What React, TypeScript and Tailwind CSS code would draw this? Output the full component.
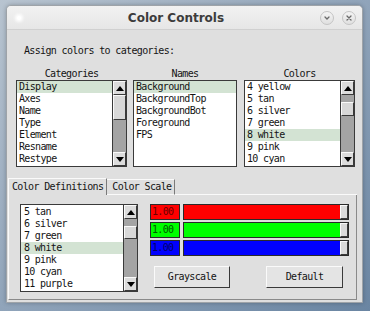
import React from "react";

const mono =
  "font-['DejaVu_Sans_Mono',monospace] text-[10px] leading-[12px] tracking-[-0.65px] text-[#141414] whitespace-nowrap";

const raised =
  "border border-t-[#fafafa] border-l-[#fafafa] border-b-[#3a3a3a] border-r-[#3a3a3a]";

const Arrow = ({ dir }: { dir: "up" | "down" }) => (
  <div className={`h-[14px] shrink-0 bg-[#dcdcdc] flex items-center justify-center ${raised}`}>
    <svg width="8" height="5" viewBox="0 0 8 5">
      <path d={dir === "up" ? "M0 5 L4 0 L8 5 Z" : "M0 0 L4 5 L8 0 Z"} fill="#000" />
    </svg>
  </div>
);

const ScrollBar = ({ before, thumb }: { before: number; thumb: number }) => (
  <div className="w-[14px] shrink-0 flex flex-col bg-[#a4a4a4] border-l border-[#3a3a3a]">
    <Arrow dir="up" />
    <div style={{ height: before }} className="shrink-0" />
    <div style={{ height: thumb }} className={`shrink-0 bg-[#d8d8d8] ${raised}`} />
    <div className="flex-1" />
    <Arrow dir="down" />
  </div>
);

type ListProps = {
  items: string[];
  selected: string;
  offset?: number;
  pad?: string;
  scroll?: { before: number; thumb: number };
  className: string;
};

const ListBox = ({ items, selected, offset = 0, pad = "pl-[2px]", scroll, className }: ListProps) => (
  <div className={`flex bg-white border border-[#3a3a3a] overflow-hidden ${className}`}>
    <div className="flex-1 overflow-hidden">
      <div style={{ marginTop: offset }}>
        {items.map((item) => (
          <div
            key={item}
            className={`h-[12px] ${pad} ${mono} ${item === selected ? "bg-[#d3e3d3]" : ""}`}
          >
            {item}
          </div>
        ))}
      </div>
    </div>
    {scroll && <ScrollBar before={scroll.before} thumb={scroll.thumb} />}
  </div>
);

const ColorRow = ({ color, ink }: { color: string; ink: string }) => (
  <div className="flex h-[16px] gap-[3px]">
    <div
      style={{ backgroundColor: color, color: ink }}
      className="w-[30px] border border-[#2a2a2a] pl-[1px] font-['DejaVu_Sans_Mono',monospace] text-[10px] leading-[14px] tracking-[-0.65px]"
    >
      1.00
    </div>
    <div className="flex-1 flex border border-[#2a2a2a]">
      <div style={{ backgroundColor: color }} className="flex-1" />
      <div className={`w-[8px] bg-[#dadada] ${raised}`} />
    </div>
  </div>
);

const TitleButton = ({ kind }: { kind: "min" | "close" }) => (
  <div className="w-[14px] h-[14px] rounded-full border border-[#c4c4c4] bg-linear-to-b from-[#f4f4f4] to-[#e0e0e0] flex items-center justify-center">
    <svg width="6" height="6" viewBox="0 0 6 6" fill="none" stroke="#6a6a6a" strokeWidth="1.3" strokeLinecap="round">
      {kind === "min" ? <path d="M1 2 L3 4 L5 2" /> : <path d="M1 1 L5 5 M5 1 L1 5" />}
    </svg>
  </div>
);

const App = () => {
  const colorNames = ["4 yellow", "5 tan", "6 silver", "7 green", "8 white", "9 pink", "10 cyan", "11 purple"];

  return (
    <div className="w-[370px] h-[311px] overflow-hidden bg-linear-to-br from-[#b8c4d0] via-[#90a4ba] to-[#6a85a2] pl-[6px] pt-[5px]">
      <div className="w-[357px] h-[298px] flex flex-col rounded-t-[5px] border border-[#9ea3a8] bg-[#dfdfdf] shadow-[0_0_4px_rgba(0,0,0,0.25)] overflow-hidden">
        {/* title bar */}
        <div className="h-[24px] shrink-0 flex items-center bg-linear-to-b from-[#f2f2f2] to-[#e6e6e6] border-b border-[#d0d0d0]">
          <div className="w-[25px] pl-[10px] flex items-center">
            <div className="w-[4px] h-[4px] rounded-full bg-white shadow-[0_0_3px_2px_rgba(255,255,255,0.9)]" />
          </div>
          <div className="flex-1 text-center font-['DejaVu_Sans',sans-serif] font-bold text-[12px] text-[#3c3c3c]">
            Color Controls
          </div>
          <div className="flex gap-[8px] pr-[6px] pt-[1px]">
            <TitleButton kind="min" />
            <TitleButton kind="close" />
          </div>
        </div>

        {/* body */}
        <div className="flex-1 flex flex-col">
          <div className={`ml-[17px] mt-[15px] ${mono}`}>Assign colors to categories:</div>

          <div className={`ml-[9px] mt-[11px] flex gap-[6px] ${mono}`}>
            <div className="w-[111px] text-center">Categories</div>
            <div className="w-[104px] text-center">Names</div>
            <div className="w-[111px] ml-[1px] text-center">Colors</div>
          </div>

          <div className="ml-[9px] flex gap-[6px] h-[87px]">
            <ListBox
              className="w-[111px]"
              items={["Display", "Axes", "Name", "Type", "Element", "Resname", "Restype", "Chain"]}
              selected="Display"
              scroll={{ before: 0, thumb: 25 }}
            />
            <ListBox
              className="w-[104px]"
              items={["Background", "BackgroundTop", "BackgroundBot", "Foreground", "FPS"]}
              selected="Background"
            />
            <ListBox
              className="w-[111px] ml-[1px]"
              items={colorNames}
              selected="8 white"
              scroll={{ before: 7, thumb: 14 }}
            />
          </div>

          {/* notebook */}
          <div className="ml-[1px] mt-[11px] w-[349px] flex flex-col">
            <div className={`h-[17px] flex items-end ${mono}`}>
              <div className="h-[17px] pl-[3px] pr-[3px] flex items-center border-t border-l border-r border-t-[#fafafa] border-l-[#fafafa] border-r-[#7a7a7a] bg-[#dfdfdf]">
                Color Definitions
              </div>
              <div className="h-[16px] pl-[5px] pr-[3px] flex items-center border-t border-r border-t-[#fafafa] border-r-[#7a7a7a] border-b border-b-[#fafafa]">
                Color Scale
              </div>
              <div className="flex-1 border-b border-[#fafafa]" />
            </div>

            <div className="h-[105px] flex pl-[11px] pt-[9px] border-l border-r border-b border-l-[#fafafa] border-r-[#8a8a8a] border-b-[#8a8a8a]">
              <ListBox
                className="w-[118px] h-[88px]"
                items={["4 yellow", "5 tan", "6 silver", "7 green", "8 white", "9 pink", "10 cyan", "11 purple", "12 lime"]}
                selected="8 white"
                offset={-11}
                pad="pl-[3px]"
                scroll={{ before: 7, thumb: 13 }}
              />

              <div className="ml-[12px] w-[199px] flex flex-col">
                <div className="flex flex-col gap-[2px]">
                  <ColorRow color="#ff0000" ink="#6a0000" />
                  <ColorRow color="#00ff00" ink="#005a00" />
                  <ColorRow color="#0000ff" ink="#00006a" />
                </div>
                <div className={`mt-[10px] flex ${mono}`}>
                  <div className={`ml-[4px] w-[76px] h-[22px] flex items-center justify-center bg-[#e4e4e4] ${raised}`}>
                    Grayscale
                  </div>
                  <div className={`ml-[36px] w-[77px] h-[22px] flex items-center justify-center bg-[#e4e4e4] ${raised}`}>
                    Default
                  </div>
                </div>
              </div>
            </div>
          </div>
        </div>
      </div>
    </div>
  );
};

export default App;
